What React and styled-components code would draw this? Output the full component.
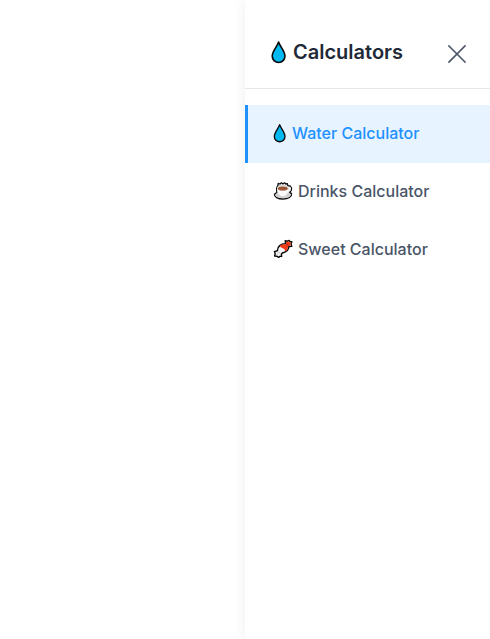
import React, { useState } from "react";
import styled, { createGlobalStyle } from "styled-components";

const GlobalStyle = createGlobalStyle`
  *, *::before, *::after { box-sizing: border-box; }
  body {
    margin: 0;
    background: #ffffff;
    font-family: Inter, "Liberation Sans", sans-serif;
    -webkit-font-smoothing: antialiased;
  }
`;

const Page = styled.div`
  display: flex;
  justify-content: flex-end;
  min-height: 100vh;
  overflow: hidden;
`;

const Drawer = styled.aside`
  width: 50%;
  min-width: 240px;
  background: #ffffff;
  box-shadow: -2px 0 10px rgba(0, 0, 0, 0.05);
`;

const DrawerHeader = styled.header`
  display: flex;
  align-items: flex-end;
  justify-content: space-between;
  padding: 36px 20px 20px 26px;
  border-bottom: 1px solid #e5e7eb;
`;

const Title = styled.h2`
  display: flex;
  align-items: center;
  gap: 6px;
  margin: 0;
  color: #1f2937;
  font-size: 20px;
  font-weight: 600;
  line-height: 32px;
`;

const CloseButton = styled.button`
  display: flex;
  padding: 4px 3px;
  border: 0;
  background: none;
  color: #4a5568;
  cursor: pointer;
`;

const Menu = styled.nav`
  display: flex;
  flex-direction: column;
  padding: 16px 0;
`;

const MenuLink = styled.a`
  display: flex;
  align-items: center;
  gap: 5px;
  padding: 15px 25px 17px;
  border-left: 3px solid ${(p) => (p.$active ? "#1e90ff" : "transparent")};
  background: ${(p) => (p.$active ? "#e7f4ff" : "transparent")};
  color: ${(p) => (p.$active ? "#1e90ff" : "#4a5568")};
  font-size: 16px;
  font-weight: 500;
  line-height: 26px;
  text-decoration: none;
`;

const Icon = styled.svg`
  display: block;
  flex: none;
`;

function Drop({ width, height }) {
  return (
    <Icon width={width} height={height} viewBox="0 0 16 24" aria-hidden="true">
      <path
        d="M7.6 2C6.2 6.6 1.2 11 1.2 16.1A6.4 6.4 0 0 0 14 16.1C14 11 9 6.6 7.6 2Z"
        fill="#00b9f1"
        stroke="#080808"
        strokeWidth="1.6"
        strokeLinejoin="round"
      />
    </Icon>
  );
}

function Coffee() {
  return (
    <Icon width="20" height="20" viewBox="0 0 20 20" aria-hidden="true">
      <path
        d="M3.6 7L4.8 4.8L5.2 2.4L7 3L8.4 1.8L9.8 2.8L11.6 1.8L12.8 3L14.4 2.6L14.8 4.6L17.2 5L18.6 7L18.2 9.6L16.6 11.4L18.6 12.6C19 15.6 15.4 18 10 18S1.2 15.8 1.4 13.2L3.8 11.4Z"
        fill="#e4e4e4"
        stroke="#101010"
        strokeWidth="1.3"
        strokeLinejoin="round"
      />
      <ellipse cx="10" cy="14.3" rx="7.6" ry="2.9" fill="#d0d0d0" />
      <path d="M4.2 7.4C4.2 12.2 6.4 15.2 9.8 15.2S15.4 12.2 15.4 7.4Z" fill="#fafafa" />
      <path d="M15.6 6.8H17V9L15.2 10.4" fill="none" stroke="#fafafa" strokeWidth="1.2" />
      <ellipse cx="9.8" cy="7.2" rx="5.8" ry="2.7" fill="#e6e1dc" />
      <ellipse cx="9.8" cy="7.4" rx="4.9" ry="2" fill="#9c5636" />
      <path d="M6.8 4.4L7 3.6M9.8 4.2L10.2 3.2M13 4.4L13.2 3.6" stroke="#888888" />
    </Icon>
  );
}

function Candy() {
  return (
    <Icon width="20" height="20" viewBox="0 0 20 20" aria-hidden="true">
      <path
        d="M12.6 4.6L12.2 1.8L14.4 2.2L16.2 1.4L17 2.6L18.8 2.8L18 5L18.8 7.4L15.8 7.6C16 10.6 13 13.4 9.4 14L8.4 15.2L8.6 17.4L6.8 17.4L5.6 18.4L4 17.2L1.6 17L2.2 14.6L1.4 12.6L4.4 11.8C4.2 7.8 8 4.4 12.6 4.6Z"
        fill="#f5f5f5"
        stroke="#080808"
        strokeWidth="1.4"
        strokeLinejoin="round"
      />
      <path
        d="M6.8 6.8C8.4 5.5 11 5.1 13.1 5.3L12.9 2.6L14.6 3L16 2.2L16.7 3.3L18 3.5L17.3 5.2L17.8 6.7L15.1 7.1C15.3 9.4 14 11.4 12 12.5C12.2 10.6 11.2 9.6 9.7 9.2C8.2 8.8 7 8.1 6.8 6.8Z"
        fill="#f03a17"
      />
      <path d="M13.4 5L15.2 6.8" stroke="#8f2011" strokeWidth="1" />
      <path d="M4.8 12.6L7.6 14.6" stroke="#c4c4c4" strokeWidth="1" />
      <path d="M3.4 16L4.8 14.8" stroke="#b5b5b5" strokeWidth="1" />
    </Icon>
  );
}

function CloseIcon() {
  return (
    <Icon width="20" height="20" viewBox="0 0 20 20" aria-hidden="true">
      <path
        d="M2 2L18 18M18 2L2 18"
        fill="none"
        stroke="currentColor"
        strokeWidth="1.6"
        strokeLinecap="square"
      />
    </Icon>
  );
}

const items = [
  { id: "water", label: "Water Calculator", icon: <Drop width="14" height="20" /> },
  { id: "drinks", label: "Drinks Calculator", icon: <Coffee /> },
  { id: "sweet", label: "Sweet Calculator", icon: <Candy /> },
];

export default function App() {
  const [active, setActive] = useState("water");

  return (
    <Page>
      <GlobalStyle />
      <Drawer>
        <DrawerHeader>
          <Title>
            <Drop width="16" height="24" />
            Calculators
          </Title>
          <CloseButton type="button" aria-label="Close">
            <CloseIcon />
          </CloseButton>
        </DrawerHeader>
        <Menu>
          {items.map((item) => (
            <MenuLink
              key={item.id}
              href={`#${item.id}`}
              $active={active === item.id}
              aria-current={active === item.id ? "page" : undefined}
              onClick={() => setActive(item.id)}
            >
              {item.icon}
              {item.label}
            </MenuLink>
          ))}
        </Menu>
      </Drawer>
    </Page>
  );
}
